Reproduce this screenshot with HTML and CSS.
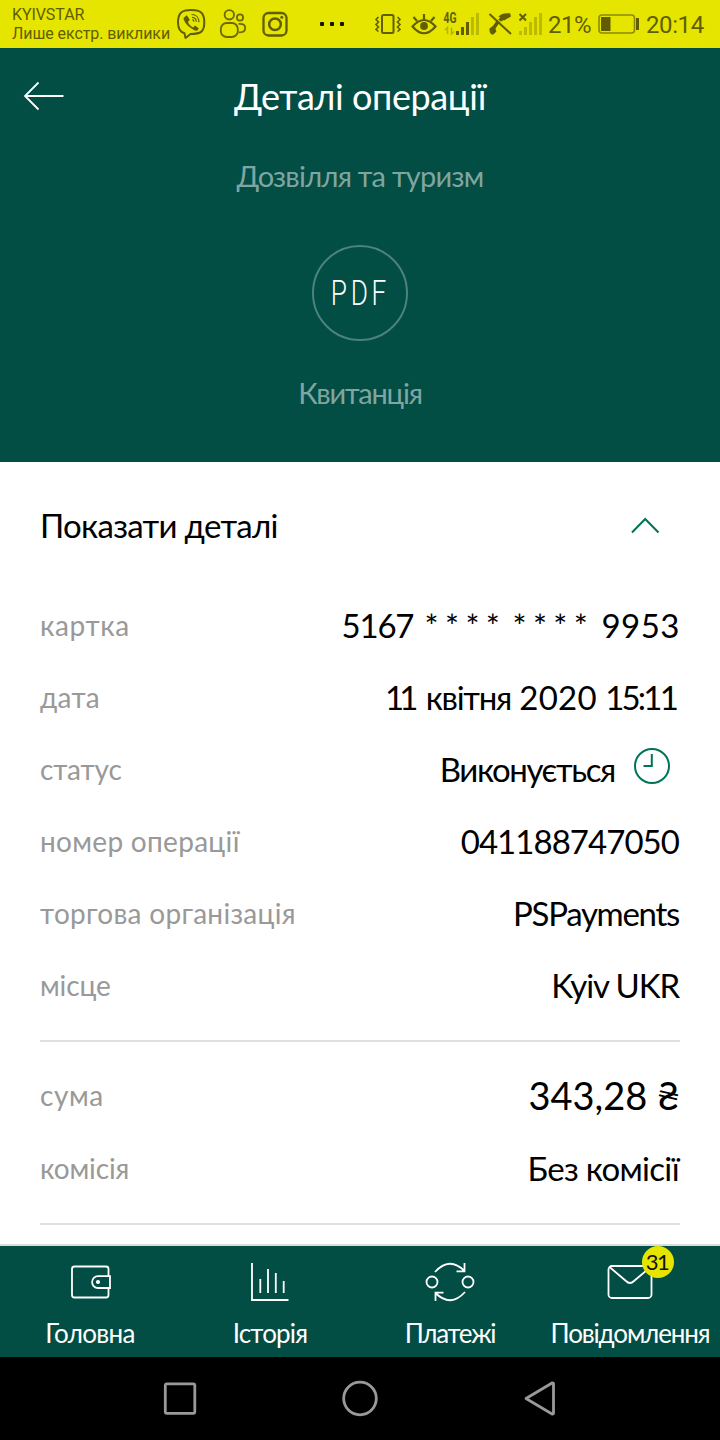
FILE: index.html
```html
<!DOCTYPE html>
<html lang="uk">
<head>
<meta charset="utf-8">
<title>Деталі операції</title>
<link rel="stylesheet" href="styles.css">
</head>
<body>
<div class="screen">
  <div class="status">
    <div class="carrier"><span>KYIVSTAR</span><span>Лише екстр. виклики</span></div>
    <svg width="36" height="48" viewBox="176 0 36 48" fill="none" stroke="#605e00" stroke-width="2">
      <path d="M184.500 33.300C180 32 178 29 178 22.500C178 13 181.500 10 191.200 10S204.300 13 204.300 22.300S201 34 190.500 34L185.500 38Z" stroke-linejoin="round"/>
      <path d="M184.200 17.200L186.800 15.200L189.800 19.800L188 22C189 24.600 190.500 26.200 193.300 27.400L195 25.400L198.700 28.200C198.200 31 196 31.200 193.500 29.800C188.500 27.300 185.300 23.600 183.700 19.600C183.400 18.600 183.500 17.800 184.200 17.200Z" fill="#605e00" stroke="none"/>
      <path d="M191.500 14.500C196 14.500 199 17.500 199 22.300M192 17.300C194.700 17.500 196.300 19.200 196.300 21.800M192.300 19.700C193.400 19.900 193.900 20.500 194 21.600" stroke-width="1.200"/>
    </svg>
    <svg width="40" height="48" viewBox="212 0 40 48" fill="none" stroke="#6b6900" stroke-width="1.800">
      <circle cx="229.300" cy="14.800" r="4.700"/><circle cx="240" cy="17.500" r="3.100"/>
      <rect x="220.800" y="23" width="17" height="14" rx="6"/>
      <path d="M238.500 23.800H240C243.500 23.800 245.200 25.500 245.200 28S243.500 32.300 240 32.300H238.500"/>
    </svg>
    <svg width="48" height="48" viewBox="252 0 48 48" fill="none" stroke="#605e00">
      <rect x="263.500" y="13" width="23" height="22.500" rx="5" stroke-width="2.300"/><circle cx="275" cy="24.200" r="5.800" stroke-width="2.500"/><circle cx="281.800" cy="17.300" r="1.500" fill="#605e00" stroke="none"/>
    </svg>
    <svg width="70" height="48" viewBox="300 0 70 48" fill="#111100"><rect x="320" y="22" width="4" height="4" rx="1"/><rect x="330" y="22" width="4" height="4" rx="1"/><rect x="340" y="22" width="4" height="4" rx="1"/></svg>
    <svg width="36" height="48" viewBox="370 0 36 48" fill="none" stroke="#605e00">
      <rect x="382" y="15" width="11.500" height="18" rx="1.500" stroke-width="2"/>
      <path d="M378.500 17L376 19.500L378.500 22L376 24.500L378.500 27L376 29.500L378.500 31.500M397.500 17L400 19.500L397.500 22L400 24.500L397.500 27L400 29.500L397.500 31.500" stroke-width="1.600"/>
    </svg>
    <svg width="34" height="48" viewBox="406 0 34 48" fill="none" stroke="#605e00" stroke-width="2.200">
      <path d="M412.500 26.500Q424 13.500 435.500 26.500Q424 40 412.500 26.500ZM424 19.500V14M417 21L413.500 17M431 21L434.500 17"/><circle cx="424" cy="26" r="3.900" fill="#605e00" stroke="none"/>
    </svg>
    <svg width="44" height="48" viewBox="440 0 44 48">
      <text x="443.500" y="23" class="net" textLength="13" lengthAdjust="spacingAndGlyphs">4G</text>
      <path d="M447.500 34V27.500L445 30M451.500 27.500V34L454 31.500" fill="none" stroke="#b5b300" stroke-width="1.500"/>
      <path d="M456 31H459V35H456ZM461 27H464V35H461ZM466 22H469V35H466Z" fill="#605e00"/><path d="M471 17H474V35H471ZM476 13H479V35H476Z" fill="#bcba00"/>
    </svg>
    <svg width="32" height="48" viewBox="484 0 32 48" fill="#605e00" stroke="#605e00">
      <path d="M493 31Q495 22.500 504 17.500" fill="none" stroke-width="3.600"/>
      <path d="M498.500 16.500Q502 12.500 510 13.300L511 16.500L504 20.500ZM489.500 28.500L493.500 25.500L496.500 31.500L493 34.800Q489 34 489.500 28.500Z" stroke="none"/>
      <path d="M490.500 12.800L512 33.300" stroke="#e6e500" stroke-width="1.200"/><path d="M489.500 14L511 34" stroke-width="2"/>
    </svg>
    <svg width="30" height="48" viewBox="516 0 30 48">
      <path d="M519.500 14L526 20.500M526 14L519.500 20.500" stroke="#605e00" stroke-width="2"/>
      <path d="M519 31H522V35H519ZM524 27H527V35H524ZM529 22H532V35H529ZM534 17H537V35H534ZM539 13H542V35H539Z" fill="#bcba00"/>
    </svg>
    <span class="pct">21%</span>
    <svg width="48" height="48" viewBox="595 0 48 48"><rect x="599" y="15" width="35.500" height="18" rx="3" fill="none" stroke="#8b8900" stroke-width="1.600"/><path d="M601 17H610.500V31H601ZM636 18H639V30H636Z" fill="#605e00"/></svg>
    <span class="time">20:14</span>
  </div>

  <header class="head">
    <div class="bar">
      <svg class="back" width="42" height="30" viewBox="0 0 42 30" fill="none" stroke="#fff" stroke-width="1.800"><path d="M15.500 1.500L2 15L15.500 28.500M2 15H40.500"/></svg>
      <h1>Деталі операції</h1>
    </div>
    <div class="category">Дозвілля та туризм</div>
    <div class="pdf"><span>PDF</span></div>
    <div class="receipt">Квитанція</div>
  </header>

  <main class="content">
    <div class="toggle">
      <span>Показати деталі</span>
      <svg width="30" height="18" viewBox="0 0 30 18" fill="none" stroke="#007458" stroke-width="2"><path d="M2 16.500L15.200 3L28.500 16.500"/></svg>
    </div>
    <dl class="rows">
      <div class="row"><dt class="wide">картка</dt><dd class="card"><span class="first">5167</span> <span class="mask">****</span> <span class="mask">****</span> <span class="last">9953</span></dd></div>
      <div class="row"><dt>дата</dt><dd class="date"><span class="day">11</span> <span class="month">квітня</span> <span class="year">2020</span> <span class="clock">15:11</span></dd></div>
      <div class="row"><dt class="tight">статус</dt><dd class="state">Виконується<svg width="38" height="38" viewBox="0 0 38 38" fill="none" stroke="#007458" stroke-width="2"><circle cx="19" cy="19" r="17"/><path d="M18.800 7V19H10.500"/></svg></dd></div>
      <div class="row"><dt>номер операції</dt><dd class="number">041188747050</dd></div>
      <div class="row"><dt>торгова організація</dt><dd class="merchant">PSPayments</dd></div>
      <div class="row"><dt class="tight">місце</dt><dd class="place">Kyiv UKR</dd></div>
    </dl>
    <dl class="rows totals">
      <div class="row"><dt class="wide">сума</dt><dd class="sum">343,28 ₴</dd></div>
      <div class="row"><dt class="tight">комісія</dt><dd class="fee">Без комісії</dd></div>
    </dl>
    <hr>
  </main>

  <nav class="tabs">
    <a class="tab"><svg width="60" height="44" viewBox="60 1260 60 44"><rect x="72" y="1266.500" width="36.500" height="31" rx="2.500"/><path d="M110 1276.200V1288H98A5.900 5.900 0 0 1 98 1276.200Z" fill="#024d44"/><circle cx="98" cy="1282" r="1.200" fill="#fff"/></svg><span class="t1">Головна</span></a>
    <a class="tab"><svg width="60" height="44" viewBox="240 1260 60 44"><path d="M252 1263V1300H288.500M260.300 1279V1293M268 1269V1293M275.800 1273V1293M283.700 1281V1293"/></svg><span class="t2">Історія</span></a>
    <a class="tab"><svg width="60" height="44" viewBox="420 1260 60 44"><circle cx="432" cy="1282" r="5.500"/><circle cx="468" cy="1282" r="5.500"/><path d="M435 1272Q449.500 1256 464.500 1271M464.500 1263V1271.300H456.500M465 1292Q450.500 1308 435.500 1293M435.500 1301V1292.700H443.500"/></svg><span class="t3">Платежі</span></a>
    <a class="tab"><svg width="60" height="44" viewBox="600 1260 60 44"><rect x="608.500" y="1266" width="43" height="32" rx="3.500"/><path d="M609.500 1267L626 1281Q630 1285 634 1281L650.500 1267"/></svg><span class="t4">Повідомлення</span><b class="badge">31</b></a>
  </nav>

  <div class="system">
    <svg width="180" height="83" viewBox="90 1357 180 83"><rect x="165.300" y="1383.800" width="29.500" height="29.500" rx="1.500"/></svg>
    <svg width="180" height="83" viewBox="270 1357 180 83"><circle cx="360" cy="1398.500" r="16.300"/></svg>
    <svg width="180" height="83" viewBox="450 1357 180 83"><path d="M526 1398.500L552.500 1382.800L553.500 1383.500V1413.500L552.500 1414.200Z" stroke-linejoin="round"/></svg>
  </div>
</div>
</body>
</html>
```
FILE: styles.css
```css
* { box-sizing: border-box; }
body { margin: 0; background: #fff; font-family: "Lato", sans-serif; font-weight: 400; }
.screen { width: 720px; height: 1440px; display: flex; flex-direction: column; overflow: hidden; }
svg { display: block; flex: none; }

.status { height: 48px; background: #e6e500; color: #605e00; display: flex; align-items: center; padding-left: 12px; font-family: "Roboto", sans-serif; }
.carrier { width: 164px; display: flex; flex-direction: column; font-size: 16px; line-height: 19px; white-space: nowrap; letter-spacing: -0.08px; }
.net { font: bold 14px "Roboto", sans-serif; fill: #605e00; }
.pct { width: 49px; padding-left: 2px; font-size: 24px; letter-spacing: -0.5px; padding-top: 1px; }
.time { padding: 1px 0 0 3px; font-size: 24px; letter-spacing: -0.4px; }

.head { height: 414px; background: #024d44; display: flex; flex-direction: column; align-items: center; }
.bar { width: 100%; height: 96px; display: grid; grid-template-columns: 66px 1fr 66px; align-items: center; }
.back { margin-left: 23px; }
h1 { margin: 0; text-align: center; color: #fff; font-size: 36px; font-weight: 400; letter-spacing: -0.4px; line-height: 44px; }
.category, .receipt { color: #80a5a1; font-size: 29px; line-height: 34px; }
.category { margin-top: 15px; letter-spacing: -0.75px; }
.pdf { width: 96px; height: 96px; margin-top: 52px; border: 2px solid #4e827c; border-radius: 50%; display: flex; align-items: center; justify-content: center; }
.pdf span { color: #fff; font-family: "Roboto", sans-serif; font-weight: 300; font-size: 35px; letter-spacing: 4.9px; margin-right: -1px; transform: scaleX(0.75); }
.receipt { margin-top: 35px; letter-spacing: -1.2px; }

.content { height: 782px; padding: 27px 40px 0; background: #fff; color: #000; }
.toggle { height: 72px; display: flex; align-items: center; justify-content: space-between; padding-right: 20px; font-size: 33px; letter-spacing: -0.7px; }
.rows { margin: 28px 0 0; }
.row { height: 72px; display: flex; align-items: center; justify-content: space-between; white-space: nowrap; }
dt { color: #999; font-size: 28px; letter-spacing: 0.3px; }
dt.wide { letter-spacing: 0.6px; }
dt.tight { letter-spacing: -0.15px; }
dd { margin: 0; font-size: 33px; }
.first { letter-spacing: -1.2px; margin-right: 4px; }
.card { letter-spacing: -1.2px; }
.mask { letter-spacing: 6.4px; }
.mask + .mask { margin-left: -1px; }
.last { letter-spacing: 0.5px; }
.date { padding-right: 4px; }
.day { letter-spacing: -5px; margin-right: 4px; }
.month { letter-spacing: -1.3px; }
.year { letter-spacing: 0.2px; }
.clock { letter-spacing: -2.8px; }
.state { display: flex; align-items: center; letter-spacing: -1.4px; padding-right: 9px; }
.state svg { margin: -7px 0 0 18px; }
.number { letter-spacing: -0.95px; padding-right: 1px; }
.merchant { letter-spacing: -1.3px; padding-right: 1px; }
.place { letter-spacing: -1.1px; padding-right: 1px; }
.totals { margin-top: 19px; padding-top: 16px; border-top: 2px solid #e0e0e0; }
.totals .row:first-child { height: 73px; }
.totals .row:last-child { height: 73px; padding-top: 1px; }
.sum { font-size: 38px; letter-spacing: 0; }
.fee { letter-spacing: -0.7px; padding-right: 1px; }
hr { margin: 19px 0 0; border: 0; border-top: 2px solid #e0e0e0; }

.tabs { height: 113px; border-top: 2px solid #d9dddc; background: #024d44; display: grid; grid-template-columns: repeat(4, 1fr); }
.tab { position: relative; padding-top: 14px; display: flex; flex-direction: column; align-items: center; color: #fff; font-size: 26px; line-height: 32px; white-space: nowrap; }
.tab svg { fill: none; stroke: #fff; stroke-width: 1.8; margin-bottom: 13px; }
.t1 { letter-spacing: -0.7px; }
.t2 { letter-spacing: -0.8px; }
.t3 { letter-spacing: -1.3px; }
.t4 { letter-spacing: -1.15px; }
.badge { position: absolute; left: 102px; top: 0; width: 32px; height: 32px; border-radius: 50%; background: #e6e500; color: #111; font-size: 22px; font-weight: 400; letter-spacing: -1.5px; text-align: center; line-height: 31px; padding-right: 2px; }

.system { height: 83px; background: #000; display: flex; justify-content: center; }
.system svg { fill: none; stroke: #999; stroke-width: 2.8; }
```
